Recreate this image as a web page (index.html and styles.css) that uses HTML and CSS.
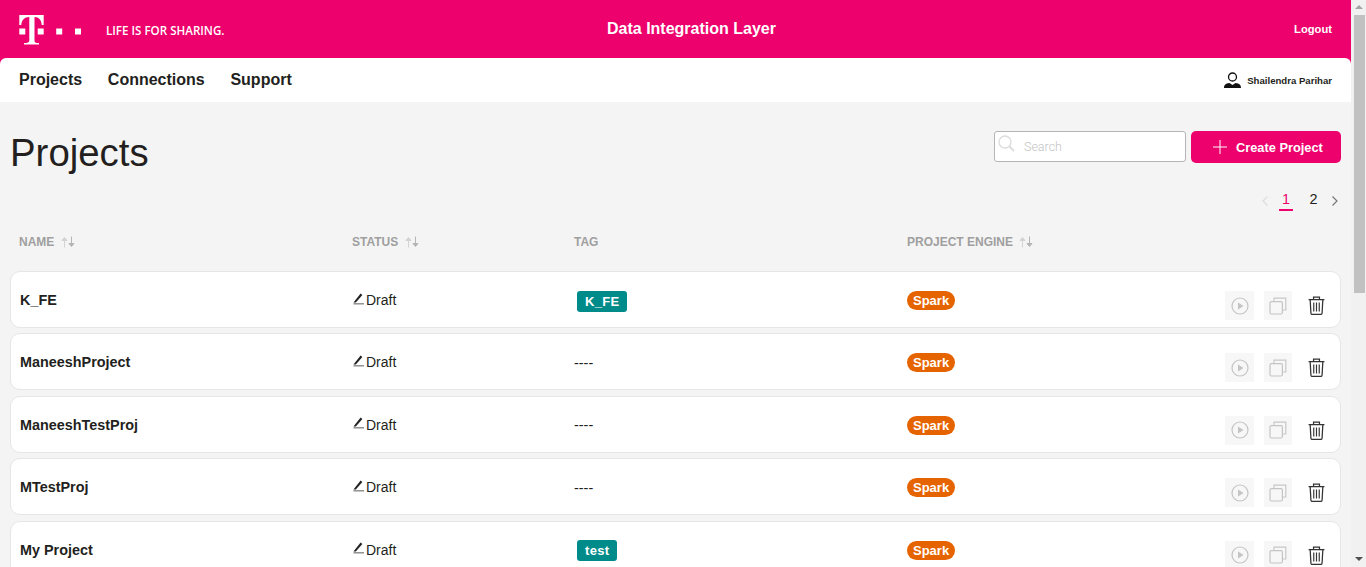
FILE: index.html
```html
<!DOCTYPE html>
<html lang="en">

<head>
    <meta charset="UTF-8">
    <meta name="viewport" content="width=device-width, initial-scale=1.0">
    <title>Data Integration Layer</title>
    <link rel="stylesheet" href="styles.css">
</head>

<body>
    <svg class="defs" width="0" height="0" aria-hidden="true">
        <symbol id="sort" viewBox="0 0 14 12">
            <path d="M3.5 11.5V2.5M1 4.5l2.5-3 2.5 3z" fill="#d3d3d3" stroke="#d3d3d3" stroke-width="1" />
            <path d="M10.5 .5v9M8 7.5l2.5 3 2.5-3z" fill="#b5b5b5" stroke="#b5b5b5" stroke-width="1" />
        </symbol>
        <symbol id="pen" viewBox="0 0 12 12">
            <path d="M.5 9.5 7.6 .5 9.4 1.9 2.8 9.500z" fill="#222" />
            <path d="M.5 10.8H11" stroke="#888" stroke-width="1.4" />
        </symbol>
        <symbol id="play" viewBox="0 0 18 18">
            <circle cx="9" cy="9" r="8" fill="none" stroke="#c4c4c4" stroke-width="1.2" />
            <path d="M7 5.5v7l5.5-3.5z" fill="#c4c4c4" />
        </symbol>
        <symbol id="copy" viewBox="0 0 18 18">
            <path d="M5 4V1.2h11.8V13H14" fill="none" stroke="#c8c8c8" stroke-width="1.2" />
            <rect x="1" y="4.6" width="12.4" height="12.4" rx="1.5" fill="none" stroke="#c4c4c4" stroke-width="1.2" />
        </symbol>
        <symbol id="trash" viewBox="0 0 16 18">
            <path d="M.5 3.5h15M5.2 3.2V1h5.6v2.2" fill="none" stroke="#333" stroke-width="1.2" />
            <path d="M2 3.5l.7 12.6c0 .8.6 1.4 1.4 1.4h7.800c.8 0 1.4-.6 1.4-1.4L14 3.5" fill="none" stroke="#333" stroke-width="1.200" />
            <path d="M5.400 6.200v8.600M8 6.200v8.600M10.600 6.200v8.600" stroke="#333" stroke-width="1.100" />
        </symbol>
    </svg>

    <div class="page">
        <header class="topbar">
            <div class="brand">
                <svg class="logo" width="66" height="32" viewBox="0 0 66 32">
                    <path d="M1.300 1H25.700V11H23.700C23.500 6 21 3 16.500 3V26.500C16.500 28.500 17.500 29 21 29V30.500H6V29C9.500 29 11.300 28.500 11.300 26.500V3C6.500 3 3.500 6 3.300 11H1.300z" fill="#fff" />
                    <path d="M1.300 14.500h6v6h-6zM19.700 14.500h6v6h-6zM38.200 14.500h6v6h-6zM57 14.500h6v6h-6z" fill="#fff" />
                </svg>
                <span class="tagline">LIFE IS FOR SHARING.</span>
            </div>
            <div class="app-title">Data Integration Layer</div>
            <a class="logout" href="#">Logout</a>
        </header>

        <nav class="mainnav">
            <div class="navlinks">
                <a href="#">Projects</a>
                <a href="#">Connections</a>
                <a href="#">Support</a>
            </div>
            <div class="user">
                <svg width="17" height="16" viewBox="0 0 17 16">
                    <circle cx="8.500" cy="5" r="4" fill="none" stroke="#111" stroke-width="1.300" />
                    <path d="M0 16c0-3 1.500-4.500 5.500-5l3 2 3-2c4 .5 5.500 2 5.500 5z" fill="#111" />
                </svg>
                <span>Shailendra Parihar</span>
            </div>
        </nav>

        <main class="content">
            <div class="titlerow">
                <h1>Projects</h1>
                <div class="actions">
                    <label class="search">
                        <svg width="17" height="17" viewBox="0 0 17 17">
                            <circle cx="7" cy="7" r="6" fill="none" stroke="#dcdcdc" stroke-width="1.300" />
                            <path d="M11.500 11.500 16 16" stroke="#dcdcdc" stroke-width="1.800" />
                        </svg>
                        <input type="text" placeholder="Search">
                    </label>
                    <button class="create">
                        <svg width="14" height="14" viewBox="0 0 14 14">
                            <path d="M7 0v14M0 7h14" stroke="#fff" stroke-width="1" />
                        </svg>
                        Create Project
                    </button>
                </div>
            </div>

            <div class="pager">
                <svg class="chevron" width="6" height="10" viewBox="0 0 6 10">
                    <path d="M5.500 .5 1 5l4.500 4.500" fill="none" stroke="#ddd" stroke-width="1.200" />
                </svg>
                <span class="pagenum current">1</span>
                <span class="pagenum">2</span>
                <svg class="chevron last" width="6" height="10" viewBox="0 0 6 10">
                    <path d="M.5 .5 5 5 .5 9.500" fill="none" stroke="#777" stroke-width="1.200" />
                </svg>
            </div>

            <div class="grid heads">
                <div>NAME <svg class="sort"><use href="#sort" /></svg></div>
                <div>STATUS <svg class="sort"><use href="#sort" /></svg></div>
                <div>TAG</div>
                <div>PROJECT ENGINE <svg class="sort"><use href="#sort" /></svg></div>
            </div>

            <div class="rows" id="rows"></div>
        </main>
    </div>

    <div class="scrollbar">
        <span class="sb-up"></span>
        <span class="sb-thumb"></span>
        <span class="sb-down"></span>
    </div>

    <script>
        const projects = [
            ['K_FE', 'K_FE'],
            ['ManeeshProject', ''],
            ['ManeeshTestProj', ''],
            ['MTestProj', ''],
            ['My Project', 'test']
        ];

        document.querySelector('#rows').innerHTML = projects.map(([name, tag]) => `
            <div class="grid row">
                <div class="name">${name}</div>
                <div class="status"><svg class="pen"><use href="#pen" /></svg>Draft</div>
                <div class="cell">${tag ? `<span class="tag">${tag}</span>` : '<span class="notag">----</span>'}</div>
                <div class="cell"><span class="engine">Spark</span></div>
                <div class="tools">
                    <span class="tool wide"><svg width="18" height="18"><use href="#play" /></svg></span>
                    <span class="tool"><svg width="18" height="18"><use href="#copy" /></svg></span>
                    <span class="tool bare"><svg width="17" height="19"><use href="#trash" /></svg></span>
                </div>
            </div>`).join('');
    </script>
</body>

</html>
```

FILE: styles.css
```css
* {
    box-sizing: border-box;
    padding: 0;
    margin: 0;
}

body {
    display: flex;
    height: 100vh;
    overflow: hidden;
    background-color: #f4f4f4;
    font-family: "Liberation Sans", Arial, sans-serif;
    color: #231f20;
}

a {
    color: inherit;
    text-decoration: none;
}

.defs {
    position: absolute;
}

.page {
    flex: 1;
    min-width: 0;
    overflow: hidden;
}

.scrollbar {
    flex: 0 0 15px;
    background: #f1f1f1;
    display: flex;
    flex-direction: column;
    align-items: center;
}

.sb-up,
.sb-down {
    flex: none;
    width: 0;
    height: 0;
    border-left: 4px solid transparent;
    border-right: 4px solid transparent;
}

.sb-up {
    margin: 5px 0;
    border-bottom: 4px solid #a3a3a3;
}

.sb-thumb {
    width: 11px;
    height: 278px;
    margin-top: 1px;
    margin-left: 1px;
    background: #c1c1c1;
}

.sb-down {
    margin-top: auto;
    margin-bottom: 6px;
    border-top: 4px solid #505050;
}

.topbar {
    height: 64px;
    background-color: #ed016c;
    color: #fff;
    display: grid;
    grid-template-columns: 589px auto 1fr;
    align-items: center;
    padding: 0 19px 6px 18px;
}

.brand {
    display: flex;
    align-items: center;
    gap: 22px;
}

.logo {
    margin-top: 1px;
}

.tagline {
    font-family: "Open Sans", sans-serif;
    font-size: 11.600px;
    font-weight: 600;
    margin-top: 3px;
}

.app-title {
    font-size: 16px;
    font-weight: 700;
}

.logout {
    justify-self: end;
    font-size: 11.200px;
    font-weight: 700;
}

.mainnav {
    height: 44px;
    margin-top: -6px;
    background: #fff;
    border-radius: 6px 6px 0 0;
    display: flex;
    align-items: center;
    justify-content: space-between;
    padding: 0 19px;
}

.navlinks {
    display: flex;
    gap: 25.700px;
    font-size: 16px;
    font-weight: 700;
}

.user {
    display: flex;
    align-items: center;
    gap: 6px;
    font-size: 9.600px;
    font-weight: 700;
}

.content {
    padding: 29px 10px 0;
}

.titlerow {
    display: flex;
    justify-content: space-between;
    align-items: flex-start;
}

h1 {
    font-size: 38.400px;
    font-weight: 400;
    line-height: 44px;
}

.actions {
    display: flex;
    gap: 5px;
}

.search {
    width: 192px;
    height: 31px;
    display: flex;
    align-items: flex-start;
    gap: 9px;
    background: #fff;
    border: 1px solid #b5b5b5;
    border-radius: 3px;
    padding: 3px 0 0 3px;
}

.search input {
    border: none;
    outline: none;
    width: 130px;
    height: 22px;
    font-family: Roboto, sans-serif;
    font-size: 12.500px;
    font-weight: 300;
    background: transparent;
}

.search input::placeholder {
    color: #c4c4c4;
}

.create {
    width: 150px;
    height: 32px;
    border: none;
    border-radius: 5px;
    background-color: #ed016c;
    color: #fff;
    font-family: "Liberation Sans", Arial, sans-serif;
    font-size: 12.800px;
    font-weight: 700;
    display: flex;
    align-items: center;
    gap: 9px;
    padding-left: 22px;
}

.pager {
    display: flex;
    justify-content: flex-end;
    align-items: center;
    height: 24px;
    margin-top: 14px;
    padding-right: 3px;
    font-size: 14.400px;
}

.pagenum {
    width: 14px;
    margin-left: 11px;
    text-align: center;
    padding-bottom: 2px;
    border-bottom: 2px solid transparent;
}

.pagenum + .pagenum {
    margin-left: 13.500px;
}

.pagenum.current {
    color: #ed016c;
    border-bottom-color: #ed016c;
}

.chevron.last {
    margin-left: 11.500px;
}

.grid {
    display: grid;
    grid-template-columns: 332px 222px 333px 1fr auto;
    align-items: center;
}

.heads {
    height: 58px;
    grid-template-columns: 333px 222px 333px 1fr;
    padding-left: 9px;
    color: #9f9f9f;
    font-size: 12px;
    font-weight: 700;
}

.sort {
    width: 14px;
    height: 12px;
    margin-left: 3px;
    vertical-align: -2px;
}

.rows {
    display: flex;
    flex-direction: column;
    gap: 5.400px;
}

.row {
    height: 57px;
    flex: none;
    background: #fff;
    border: 1px solid #e6e6e6;
    border-radius: 10px;
    padding-left: 9px;
}

.name {
    font-size: 14.400px;
    font-weight: 700;
    margin-top: 1px;
}

.status {
    font-size: 14px;
    display: flex;
    align-items: center;
    margin-top: 1px;
}

.cell {
    margin-top: 2px;
}

.pen {
    width: 12px;
    height: 12px;
    margin: -3px 1px 0 1px;
}

.notag {
    font-size: 14.400px;
}

.tag {
    display: inline-block;
    margin: 1px 0 0 3px;
    padding: 0 8px;
    height: 21px;
    line-height: 21px;
    border-radius: 3px;
    background-color: #008b8b;
    color: #fff;
    font-size: 13px;
    font-weight: 700;
    letter-spacing: 0.3px;
}

.engine {
    display: inline-block;
    height: 19px;
    line-height: 19px;
    padding: 0 6px;
    border-radius: 10px;
    background-color: #e66400;
    color: #fff;
    font-size: 13px;
    font-weight: 700;
}

.tools {
    display: flex;
    align-items: center;
    gap: 10px;
    padding: 12px 10px 0 0;
}

.tool {
    width: 28px;
    height: 29px;
    background: #f7f7f7;
    display: flex;
    align-items: center;
    justify-content: center;
}

.tool.wide {
    width: 29px;
}

.tool.bare {
    background: none;
}
```
